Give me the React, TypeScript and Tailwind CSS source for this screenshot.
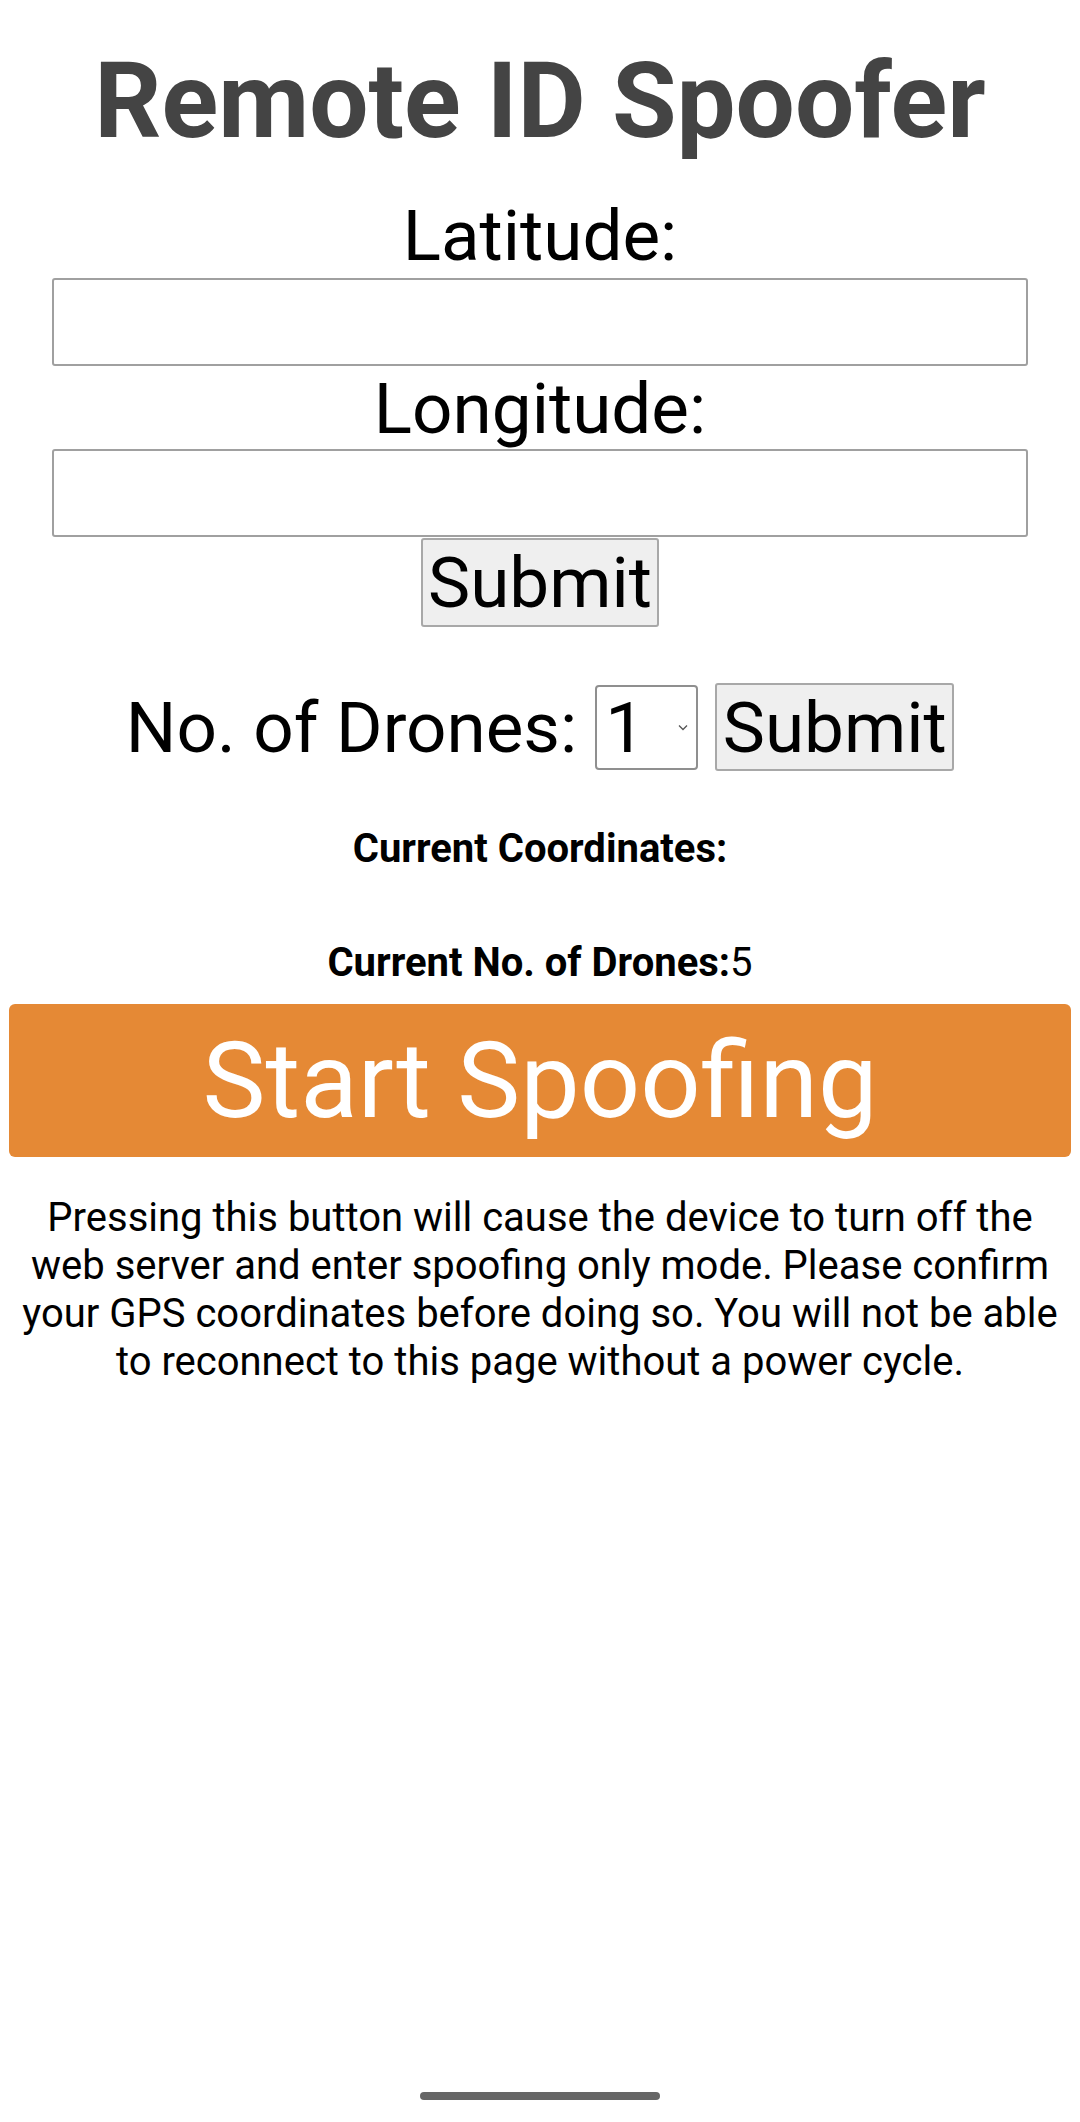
import { useState } from "react";

export default function App() {
  const [lat, setLat] = useState("");
  const [lng, setLng] = useState("");
  const [drones, setDrones] = useState("1");

  return (
    <div className="flex flex-col items-center h-[2122px] bg-white text-black font-['Roboto',_'Noto_Sans',_sans-serif]">
      <h1 className="mt-[49px] text-[105px] font-bold leading-none text-[#444444]">Remote ID Spoofer</h1>

      {/* Coordinates form */}
      <p className="mt-[46px] text-[71px] leading-none">Latitude:</p>
      <input
        value={lat}
        onChange={e => setLat(e.target.value)}
        className="mt-[7px] h-[88px] w-[976px] border-2 border-[#a0a0a0] rounded-[3px] bg-white px-3 text-[50px] outline-none"
      />
      <p className="mt-[7px] text-[71px] leading-none">Longitude:</p>
      <input
        value={lng}
        onChange={e => setLng(e.target.value)}
        className="mt-[5px] h-[88px] w-[976px] border-2 border-[#a0a0a0] rounded-[3px] bg-white px-3 text-[50px] outline-none"
      />
      <button className="mt-px h-[89px] w-[238px] flex items-center justify-center border-2 border-[#a8a8a8] rounded-[3px] bg-[#efefef] text-[71px] leading-none">
        Submit
      </button>

      {/* Drones form */}
      <div className="mt-[56px] flex items-center">
        <span className="text-[71px] leading-none">No. of Drones:</span>
        <div className="ml-[18px] h-[85px] w-[103px] flex items-center justify-between border-2 border-[#8f8f8f] rounded-[4px] pl-[8px] pr-[6px]">
          <span className="text-[71px] leading-none">{drones}</span>
          <svg width="10" height="7" viewBox="0 0 10 7" fill="none" className="mr-[2px]">
            <path d="M1 1.5 L5 5.5 L9 1.5" stroke="#555" strokeWidth="1.3" />
          </svg>
        </div>
        <button
          onClick={() => setDrones(drones === "5" ? "1" : String(Number(drones) + 1))}
          className="ml-[17px] h-[88px] w-[239px] flex items-center justify-center border-2 border-[#a8a8a8] rounded-[3px] bg-[#efefef] text-[71px] leading-none"
        >
          Submit
        </button>
      </div>

      {/* Status */}
      <p className="mt-[58px] text-[40px] font-bold leading-none">Current Coordinates:</p>
      <p className="mt-[74px] text-[40px] leading-none">
        <span className="font-bold">Current No. of Drones:</span>5
      </p>

      <button className="mt-[21px] h-[153px] w-[1062px] flex items-center justify-center rounded-[6px] bg-[#e58935] text-white text-[106px] leading-none">
        Start Spoofing
      </button>

      <p className="mt-[37px] px-[9px] text-center text-[40px] leading-[48px]">
        Pressing this button will cause the device to turn off the web server and enter spoofing only mode. Please confirm your GPS coordinates before doing so. You will not be able to reconnect to this page without a power cycle.
      </p>

      {/* Gesture bar */}
      <div className="mt-auto mb-[22px] h-[8px] w-[240px] rounded-full bg-[#666666]" />
    </div>
  );
}
